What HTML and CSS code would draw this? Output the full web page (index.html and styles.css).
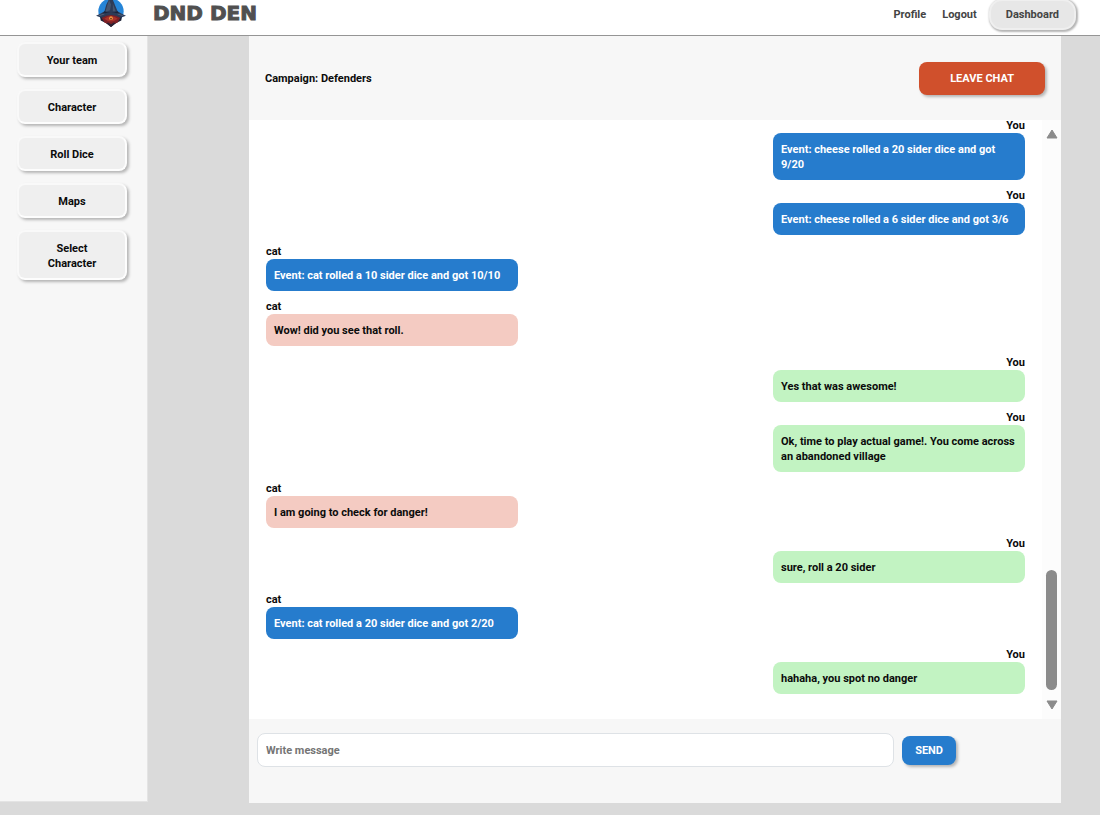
FILE: index.html
```html
<!DOCTYPE html>
<html lang="en">
<head>
<meta charset="utf-8">
<meta name="viewport" content="width=device-width, initial-scale=1">
<title>DND DEN</title>
<link rel="stylesheet" href="styles.css">
</head>
<body>
<header class="topbar">
  <a class="brand" href="#">
    <svg class="brand-icon" viewBox="0 0 32 32" aria-hidden="true">
      <circle cx="16" cy="14" r="13.5" fill="#2585d8"/>
      <path d="M4 17 L28 17 L27 24 L21 27 L16 31 L11 27 L5 24Z" fill="#1b2136"/>
      <path d="M6 21 Q16 14 26 21 L23 26 Q16 30 9 26Z" fill="#7e2025"/>
      <path d="M9 22 Q16 17 23 22 Q16 28 9 22Z" fill="#a9322a"/>
      <circle cx="16" cy="21.5" r="2" fill="#f0903a"/>
      <circle cx="16" cy="22" r="0.8" fill="#35141b"/>
      <path d="M14 1 L18 2 L20 7 L23 14 L28 17 L32 19 L26 21 Q16 15 6 21 L0 19 L4 17 L9 14 L11 7Z" fill="#2d3b57"/>
      <path d="M14 2 L16 7 L15 13 L10 15 L12 8Z M18 6 L21 14 L18 14Z" fill="#46566f"/>
      <path d="M9 14 Q16 17 23 14 L25 17 Q16 14 7 17Z" fill="#1a2238"/>
      <path d="M3 19 L9 17 M23 17 L29 19" stroke="#52607a" stroke-width="1"/>
      <path d="M11 27 L13 26 L16 28 L19 26 L21 27 L16 31Z" fill="#2b2234"/>
    </svg>
    <span class="brand-name">DND DEN</span>
  </a>
  <nav class="nav">
    <a class="nav-link" href="#">Profile</a>
    <a class="nav-link" href="#">Logout</a>
    <button class="dashboard" type="button">Dashboard</button>
  </nav>
</header>
<div class="layout">
  <aside class="sidebar">
    <button class="side-button" type="button">Your team</button>
    <button class="side-button" type="button">Character</button>
    <button class="side-button" type="button">Roll Dice</button>
    <button class="side-button" type="button">Maps</button>
    <button class="side-button" type="button">Select Character</button>
  </aside>
  <main class="chat">
    <div class="chat-header">
      <h1 class="campaign">Campaign: Defenders</h1>
      <button class="leave" type="button">LEAVE CHAT</button>
    </div>
    <div class="chat-body">
      <ul class="messages">
        <li class="message own"><span class="author">You</span><p class="bubble event">Event: cheese rolled a 20 sider dice and got 9/20</p></li>
        <li class="message own"><span class="author">You</span><p class="bubble event">Event: cheese rolled a 6 sider dice and got 3/6</p></li>
        <li class="message"><span class="author">cat</span><p class="bubble event">Event: cat rolled a 10 sider dice and got 10/10</p></li>
        <li class="message"><span class="author">cat</span><p class="bubble">Wow! did you see that roll.</p></li>
        <li class="message own"><span class="author">You</span><p class="bubble">Yes that was awesome!</p></li>
        <li class="message own"><span class="author">You</span><p class="bubble">Ok, time to play actual game!. You come across an abandoned village</p></li>
        <li class="message"><span class="author">cat</span><p class="bubble">I am going to check for danger!</p></li>
        <li class="message own"><span class="author">You</span><p class="bubble">sure, roll a 20 sider</p></li>
        <li class="message"><span class="author">cat</span><p class="bubble event">Event: cat rolled a 20 sider dice and got 2/20</p></li>
        <li class="message own"><span class="author">You</span><p class="bubble">hahaha, you spot no danger</p></li>
      </ul>
      <div class="scrollbar" aria-hidden="true">
        <svg class="arrow" viewBox="0 0 12 10"><path d="M6 1 L11 9 L1 9Z"/></svg>
        <div class="thumb"></div>
        <svg class="arrow" viewBox="0 0 12 10"><path d="M6 9 L1 1 L11 1Z"/></svg>
      </div>
    </div>
    <form class="composer">
      <input class="composer-input" type="text" placeholder="Write message" aria-label="Write message">
      <button class="send" type="button">SEND</button>
    </form>
  </main>
</div>
</body>
</html>
```
FILE: styles.css
```css
* {
  box-sizing: border-box;
}

body {
  margin: 0;
  min-height: 100vh;
  display: flex;
  flex-direction: column;
  background: #dadada;
  color: #0b0b0b;
  font: 700 11px/15px Roboto, "Liberation Sans", sans-serif;
}

button,
input {
  font: inherit;
  color: inherit;
}

button {
  cursor: pointer;
}

.topbar {
  display: flex;
  justify-content: space-between;
  align-items: flex-start;
  height: 36px;
  padding: 0 24px 0 96px;
  overflow: hidden;
  background: #fff;
  border-bottom: 1px solid #959595;
}

.brand {
  display: flex;
  align-items: center;
  gap: 27px;
  margin-top: -2px;
  color: #505050;
  text-decoration: none;
}

.brand-icon {
  width: 30px;
  height: 30px;
}

.brand-name {
  font: 700 20px/30px "DejaVu Sans", sans-serif;
  -webkit-text-stroke: 1px #505050;
}

.nav {
  display: flex;
  align-items: center;
  gap: 16px;
  margin-top: -1px;
}

.nav-link {
  color: #444;
  text-decoration: none;
}

.dashboard {
  margin-left: -4px;
  padding: 6px 15px;
  border: 2px solid #efefef;
  border-width: 2px;
  border-radius: 13px;
  background: #e7e7e7;
  color: #444;
  box-shadow: 1px 1px 2px 1px #b5b5b5;
}

.layout {
  flex: 1;
  display: flex;
}

.sidebar {
  flex: none;
  display: flex;
  flex-direction: column;
  gap: 12px;
  width: 148px;
  margin-bottom: 13px;
  padding: 6px 20px 6px 17px;
  background: #f7f7f7;
  border: solid #e4e4e4;
  border-width: 0 1px 1px 0;
}

.side-button {
  padding: 9px 16px 7px;
  border: 2px solid #fdfdfd;
  border-top-color: #f9f9f9;
  border-left-color: #f9f9f9;
  border-radius: 8px;
  background: #efefef;
  box-shadow: 2px 2px 3px #b5b5b5;
}

.chat {
  flex: 1;
  min-width: 0;
  display: flex;
  flex-direction: column;
  margin: 0 39px 12px 101px;
  background: #f7f7f7;
}

.chat-header {
  display: flex;
  justify-content: space-between;
  align-items: center;
  height: 84px;
  padding: 0 16px;
}

.campaign {
  margin: 0;
  font-size: 11px;
}

.leave {
  padding: 9px 31px;
  border: 0;
  border-radius: 8px;
  background: #d0502c;
  color: #fff;
  box-shadow: 2px 2px 3px #b5b5b5;
}

.chat-body {
  flex: 1;
  display: flex;
  background: #fff;
}

.messages {
  flex: 1;
  display: flex;
  flex-direction: column;
  justify-content: space-between;
  margin: 0;
  padding: 0 17px 25px;
  list-style: none;
}

.message {
  display: flex;
  flex-direction: column;
  align-items: flex-start;
  gap: 2px;
}

.author {
  line-height: 11px;
}

.bubble {
  width: 252px;
  margin: 0;
  padding: 9px 8px 8px;
  border-radius: 8px;
  background: #f4cbc2;
}

.own {
  align-items: flex-end;
}

.own .bubble {
  background: #c2f3c2;
}

.message .event {
  background: #267ccd;
  color: #fff;
}

.scrollbar {
  display: flex;
  flex-direction: column;
  align-items: center;
  gap: 10px;
  width: 19px;
  padding: 9px 0;
  background: #fcfcfc;
}

.arrow {
  width: 12px;
  height: 10px;
  fill: #8b8b8b;
  stroke: #8b8b8b;
  stroke-linejoin: round;
}

.thumb {
  width: 11px;
  height: 120px;
  margin-top: auto;
  border-radius: 6px;
  background: #8b8b8b;
}

.composer {
  display: flex;
  align-items: center;
  gap: 8px;
  padding: 14px 105px 36px 8px;
}

.composer-input {
  flex: 1;
  min-width: 0;
  height: 34px;
  padding: 0 8px;
  border: 1px solid #dee2e6;
  border-radius: 8px;
  background: #fff;
}

.composer-input::placeholder {
  color: #757575;
  opacity: 1;
}

.send {
  padding: 7px 13px;
  border: 0;
  border-radius: 8px;
  background: #267ccd;
  color: #fff;
  box-shadow: 2px 2px 3px #b5b5b5;
}
```
